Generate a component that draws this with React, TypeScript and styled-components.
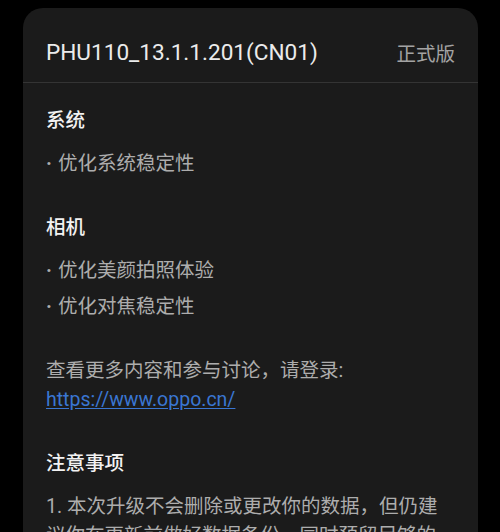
import styled, { createGlobalStyle } from "styled-components";

const Global = createGlobalStyle`
  html, body {
    margin: 0;
    padding: 0;
    background: #000;
  }
  body {
    font-family: Roboto, "Noto Sans CJK SC", sans-serif;
    -webkit-font-smoothing: antialiased;
  }
`;

const Page = styled.main`
  height: 532px;
  overflow: hidden;
  padding: 8px 22px 0 23px;
  box-sizing: border-box;
`;

const Card = styled.section`
  background: #1b1b1b;
  border-radius: 20px 20px 0 0;
  min-height: 600px;
`;

const Header = styled.header`
  display: flex;
  align-items: center;
  justify-content: space-between;
  height: 75px;
  padding: 14px 23px 0;
  box-sizing: border-box;
  border-bottom: 1px solid #343434;
`;

const Version = styled.h1`
  margin: 0;
  font-size: 22.6px;
  font-weight: 400;
  color: #ebebeb;
`;

const Channel = styled.span`
  font-size: 19.5px;
  color: #a3a3a3;
`;

const Body = styled.div`
  padding: 23px 23px 0;
  display: flex;
  flex-direction: column;
  gap: 35px;
`;

const Section = styled.div`
  display: flex;
  flex-direction: column;
`;

const Heading = styled.h2`
  margin: 0 0 14px;
  font-size: 19.5px;
  line-height: 29px;
  font-weight: 500;
  color: #f2f2f2;
`;

const List = styled.ul`
  margin: 0;
  padding: 0;
  list-style: none;
  display: flex;
  flex-direction: column;
  gap: 7px;
`;

const Item = styled.li`
  font-size: 19.5px;
  line-height: 29px;
  color: #adadad;

  &::before {
    content: "·";
    display: inline-block;
    width: 12px;
    font-weight: 700;
  }
`;

const Text = styled.p`
  margin: 0;
  font-size: 19.5px;
  line-height: 29px;
  color: #adadad;
`;

const Link = styled.a`
  color: #3a76d2;
  text-decoration: underline;
  text-underline-offset: 2px;
`;

const sections = [
  { title: "系统", items: ["优化系统稳定性"] },
  { title: "相机", items: ["优化美颜拍照体验", "优化对焦稳定性"] },
];

export default function App() {
  return (
    <>
      <Global />
      <Page>
        <Card>
          <Header>
            <Version>PHU110_13.1.1.201(CN01)</Version>
            <Channel>正式版</Channel>
          </Header>
          <Body>
            {sections.map((s) => (
              <Section key={s.title}>
                <Heading>{s.title}</Heading>
                <List>
                  {s.items.map((it) => (
                    <Item key={it}>{it}</Item>
                  ))}
                </List>
              </Section>
            ))}
            <Section>
              <Text>
                查看更多内容和参与讨论，请登录:
                <br />
                <Link href="#">https://www.oppo.cn/</Link>
              </Text>
            </Section>
            <Section>
              <Heading>注意事项</Heading>
              <Text>
                1. 本次升级不会删除或更改你的数据，但仍建议你在更新前做好数据备份，同时预留足够的存储空间。
              </Text>
            </Section>
          </Body>
        </Card>
      </Page>
    </>
  );
}
